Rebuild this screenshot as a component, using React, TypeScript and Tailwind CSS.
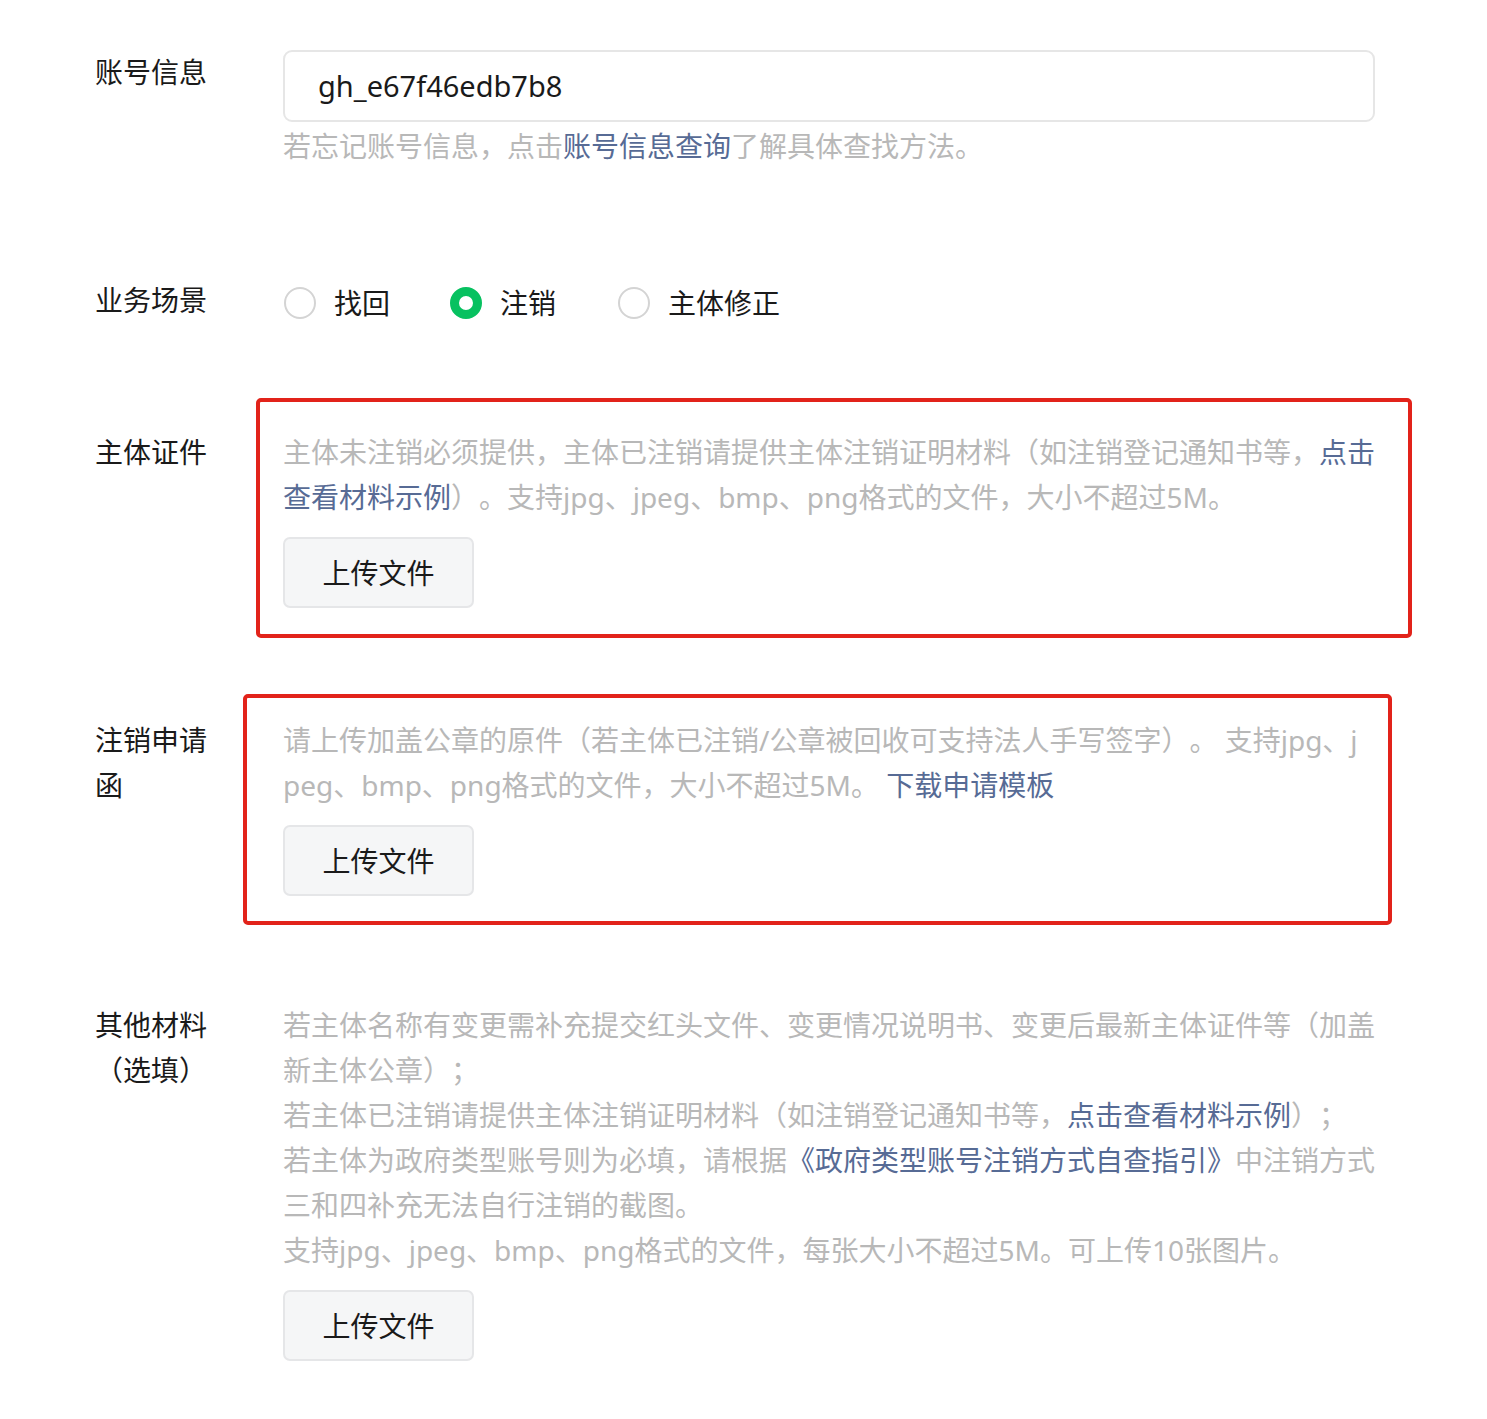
import React from "react";

const font = { fontFamily: '"Noto Sans", "Noto Sans CJK SC", sans-serif' };

function Link({ children }: { children: React.ReactNode }) {
  return <span className="text-[#576b95]">{children}</span>;
}

function UploadButton() {
  return (
    <button className="mt-[17px] flex h-[71px] w-[191px] items-center justify-center rounded-[7px] border-2 border-[#e5e6e8] bg-[#f5f6f7] text-[28px] text-[#1a1a1a]">
      上传文件
    </button>
  );
}

function Radio({ checked, label }: { checked?: boolean; label: string }) {
  return (
    <div className="flex items-center">
      {checked ? (
        <span className="box-border h-[32px] w-[32px] rounded-full border-[9px] border-[#07c160] bg-white" />
      ) : (
        <span className="box-border h-[32px] w-[32px] rounded-full border-2 border-[#d4d4d4] bg-white" />
      )}
      <span className="ml-[18px] text-[28px] text-[#1a1a1a]">{label}</span>
    </div>
  );
}

function Row({ label, children, className }: { label: string; children: React.ReactNode; className?: string }) {
  return (
    <div className={"flex " + (className ?? "")}>
      <div className="w-[112px] shrink-0 text-[28px] leading-[45px] text-[#1a1a1a]">{label}</div>
      <div className="ml-[76px] w-[1094px]">{children}</div>
    </div>
  );
}

export default function App() {
  return (
    <div
      className="min-h-[1419px] w-[1487px] bg-white pl-[95px] pt-[50px] [text-spacing-trim:space-all]"
      style={font}
    >
      <Row label="账号信息">
        <div className="flex h-[72px] w-[1092px] items-center rounded-[9px] border-2 border-[#e6e6e6] bg-white pl-[33px] text-[29px] text-[#1a1a1a]">
          gh_e67f46edb7b8
        </div>
        <div className="mt-[2px] text-[28px] leading-[45px] text-[#b8b8b8]">
          若忘记账号信息，点击<Link>账号信息查询</Link>了解具体查找方法。
        </div>
      </Row>

      <Row label="业务场景" className="mt-[109px]">
        <div className="flex h-[50px] items-center pl-[1px]">
          <Radio label="找回" />
          <div className="ml-[60px]">
            <Radio checked label="注销" />
          </div>
          <div className="ml-[62px]">
            <Radio label="主体修正" />
          </div>
        </div>
      </Row>

      <Row label="主体证件" className="mt-[102px]">
        <div className="relative">
          <div className="break-all text-[28px] leading-[45px] text-[#b8b8b8]">
            主体未注销必须提供，主体已注销请提供主体注销证明材料（如注销登记通知书等，<Link>点击查看材料示例</Link>）。支持jpg、jpeg、bmp、png格式的文件，大小不超过5M。
          </div>
          <UploadButton />
          <div className="pointer-events-none absolute -bottom-[30px] -left-[27px] -right-[35px] -top-[32px] rounded-[5px] border-[4px] border-[#e2231a]" />
        </div>
      </Row>

      <Row label="注销申请函" className="mt-[110px]">
        <div className="relative">
          <div className="w-[1082px] break-all text-[28px] leading-[45px] text-[#b8b8b8]">
            请上传加盖公章的原件（若主体已注销/公章被回收可支持法人手写签字）。 支持jpg、jpeg、bmp、png格式的文件，大小不超过5M。 <Link>下载申请模板</Link>
          </div>
          <UploadButton />
          <div className="pointer-events-none absolute -bottom-[29px] -left-[40px] -right-[15px] -top-[24px] rounded-[5px] border-[4px] border-[#e2231a]" />
        </div>
      </Row>

      <Row label="其他材料（选填）" className="mt-[107px]">
        <div className="break-all text-[28px] leading-[45px] text-[#b8b8b8]">
          <div>若主体名称有变更需补充提交红头文件、变更情况说明书、变更后最新主体证件等（加盖新主体公章）；</div>
          <div>
            若主体已注销请提供主体注销证明材料（如注销登记通知书等，<Link>点击查看材料示例</Link>）；
          </div>
          <div>
            若主体为政府类型账号则为必填，请根据<Link>《政府类型账号注销方式自查指引》</Link>中注销方式三和四补充无法自行注销的截图。
          </div>
          <div>支持jpg、jpeg、bmp、png格式的文件，每张大小不超过5M。可上传10张图片。</div>
        </div>
        <UploadButton />
      </Row>
    </div>
  );
}
